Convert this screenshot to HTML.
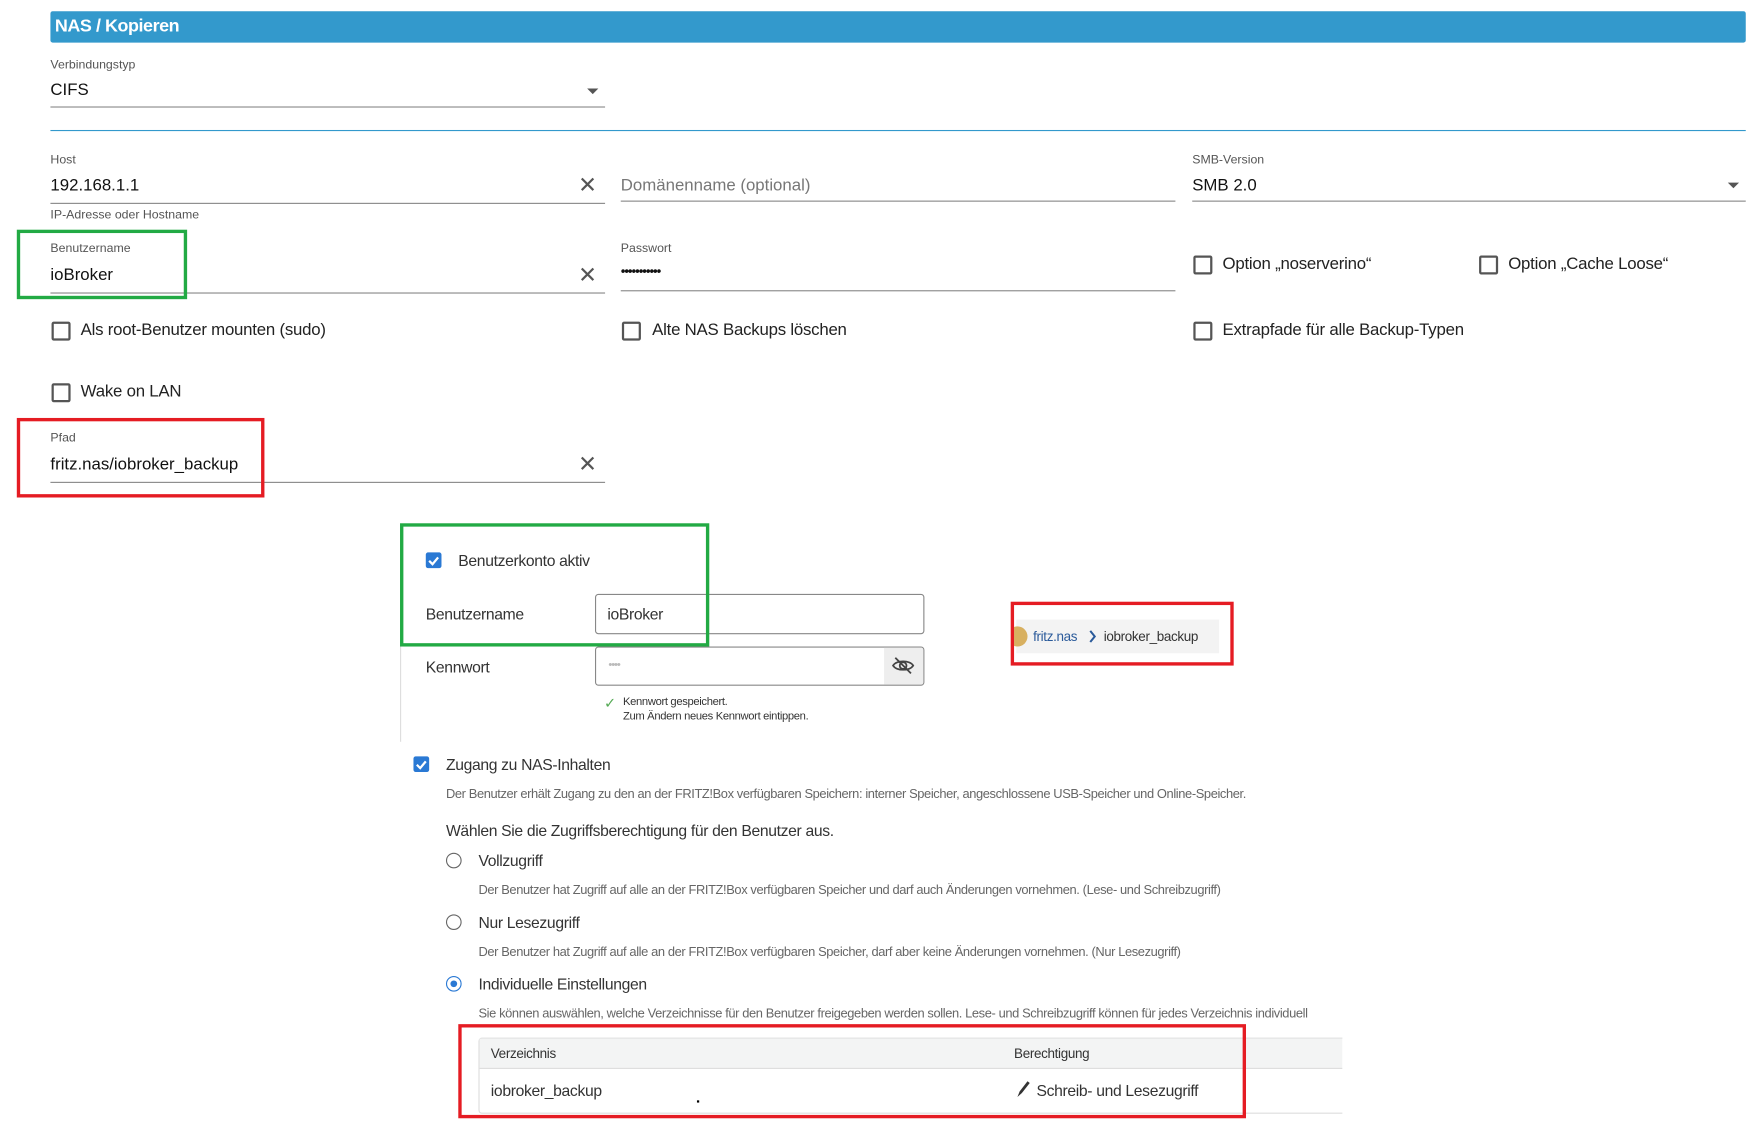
<!DOCTYPE html>
<html><head><meta charset="utf-8"><style>
html,body{margin:0;padding:0;background:#fff;width:1748px;height:1132px;overflow:hidden}
#w{position:absolute;left:0;top:0;width:1560px;height:1010px;transform:scale(1.12051);transform-origin:0 0;font-family:"Liberation Sans",sans-serif;color:#222}
.a{position:absolute;white-space:nowrap}
.lbl{font-size:11px;color:#555}
.val{font-size:15px;color:#111}
.ln{position:absolute;height:1px;background:#888}
.x{position:absolute;font-size:20px;color:#555;line-height:1}
.cb{position:absolute;width:13px;height:13px;border:2px solid #555;border-radius:2px}
.ct{font-size:15px;color:#222;letter-spacing:-.2px}
.box{position:absolute;border:3px solid}
.f{font-family:"Liberation Sans",sans-serif;color:#333;letter-spacing:-.3px}
.cbb{position:absolute;width:14px;height:14px;background:#2a79d4;border-radius:2px}
.rd{position:absolute;width:12px;height:12px;border:1.5px solid #666;border-radius:50%}
.d{font-size:11.5px;color:#666;letter-spacing:-.35px}
</style></head><body><div id="w">
<div class="a" style="left:45px;top:10px;width:1513px;height:28px;background:#3399cc;border-radius:2px"></div>
<div class="a" style="left:49px;top:15px;color:#fff;font-weight:bold;font-size:16px;letter-spacing:-.4px">NAS / Kopieren</div>

<div class="a lbl" style="left:45px;top:52px">Verbindungstyp</div>
<div class="a val" style="left:45px;top:72px">CIFS</div>
<div class="a" style="left:524px;top:79px;border:5px solid transparent;border-top:5px solid #555"></div>
<div class="ln" style="left:45px;top:95px;width:495px"></div>
<div class="ln" style="left:45px;top:116px;width:1513px;background:#3399cc"></div>

<div class="a lbl" style="left:45px;top:137px">Host</div>
<div class="a val" style="left:45px;top:157px">192.168.1.1</div>
<div class="x" style="left:516px;top:156px">✕</div>
<div class="ln" style="left:45px;top:181px;width:495px"></div>
<div class="a lbl" style="left:45px;top:186px">IP-Adresse oder Hostname</div>
<div class="a val" style="left:554px;top:157px;color:#777">Domänenname (optional)</div>
<div class="ln" style="left:554px;top:179px;width:495px"></div>
<div class="a lbl" style="left:1064px;top:137px">SMB-Version</div>
<div class="a val" style="left:1064px;top:157px">SMB 2.0</div>
<div class="a" style="left:1542px;top:163px;border:5px solid transparent;border-top:5px solid #555"></div>
<div class="ln" style="left:1064px;top:179px;width:494px"></div>

<div class="a lbl" style="left:45px;top:216px">Benutzername</div>
<div class="a val" style="left:45px;top:237px">ioBroker</div>
<div class="x" style="left:516px;top:236px">✕</div>
<div class="ln" style="left:45px;top:261px;width:495px"></div>
<div class="a lbl" style="left:554px;top:216px">Passwort</div>
<div class="a val" style="left:554px;top:235px;font-size:12px;letter-spacing:-1px">•••••••••••</div>
<div class="ln" style="left:554px;top:259px;width:495px"></div>
<div class="cb" style="left:1065px;top:228px"></div><div class="a ct" style="left:1091px;top:227px">Option „noserverino“</div>
<div class="cb" style="left:1320px;top:228px"></div><div class="a ct" style="left:1346px;top:227px">Option „Cache Loose“</div>
<div class="box" style="left:15px;top:205px;width:146px;height:56px;border-color:#22aa44"></div>

<div class="cb" style="left:46px;top:287px"></div><div class="a ct" style="left:72px;top:286px">Als root-Benutzer mounten (sudo)</div>
<div class="cb" style="left:555px;top:287px"></div><div class="a ct" style="left:582px;top:286px">Alte NAS Backups löschen</div>
<div class="cb" style="left:1065px;top:287px"></div><div class="a ct" style="left:1091px;top:286px">Extrapfade für alle Backup-Typen</div>
<div class="cb" style="left:46px;top:342px"></div><div class="a ct" style="left:72px;top:341px">Wake on LAN</div>

<div class="a lbl" style="left:45px;top:385px">Pfad</div>
<div class="a val" style="left:45px;top:406px">fritz.nas/iobroker_backup</div>
<div class="x" style="left:516px;top:405px">✕</div>
<div class="ln" style="left:45px;top:430px;width:495px"></div>
<div class="box" style="left:15px;top:373px;width:215px;height:65px;border-color:#e51c23"></div>

<div class="a" style="left:357px;top:576px;width:1px;height:86px;background:#ddd"></div>
<div class="cbb" style="left:380px;top:493px"><svg width="14" height="14"><path d="M3 7.5l3 3 5-6" stroke="#fff" stroke-width="2" fill="none"/></svg></div>
<div class="a f" style="left:409px;top:492px;font-size:14px">Benutzerkonto aktiv</div>
<div class="a f" style="left:380px;top:540px;font-size:14px">Benutzername</div>
<div class="a" style="left:531px;top:530px;width:292px;height:34px;border:1px solid #888;border-radius:3px"></div>
<div class="a f" style="left:542px;top:540px;font-size:14px">ioBroker</div>
<div class="a f" style="left:380px;top:587px;font-size:14px">Kennwort</div>
<div class="a" style="left:531px;top:577px;width:292px;height:33px;border:1px solid #888;border-radius:3px;overflow:hidden"><div style="position:absolute;right:0;top:0;width:35px;height:33px;background:#eee"></div></div>
<div class="a" style="left:543px;top:588px;font-size:10px;color:#bbb;letter-spacing:-1px">••••</div>
<svg class="a" style="left:795px;top:585px" width="22" height="18" viewBox="0 0 22 18"><path d="M2 9c3-5 15-5 18 0c-3 5-15 5-18 0z" stroke="#444" stroke-width="1.6" fill="none"/><circle cx="11" cy="9" r="3" stroke="#444" stroke-width="1.6" fill="none"/><path d="M4 2l14 14" stroke="#444" stroke-width="1.6"/></svg>
<div class="a" style="left:539px;top:620px;color:#5a5;font-size:13px">✓</div>
<div class="a f" style="left:556px;top:620px;font-size:10px;line-height:13px">Kennwort gespeichert.<br>Zum Ändern neues Kennwort eintippen.</div>
<div class="box" style="left:357px;top:467px;width:270px;height:104px;border-color:#22aa44"></div>

<div class="a" style="left:907px;top:553px;width:181px;height:30px;background:#f3f3f3"></div>
<div class="a" style="left:899px;top:559px;width:18px;height:18px;border-radius:50%;background:#d8b060"></div>
<div class="a" style="left:893px;top:553px;width:12px;height:30px;background:#fff"></div>
<div class="a f" style="left:922px;top:561px;font-size:12px;color:#2a5a9a">fritz.nas</div>
<svg class="a" style="left:971px;top:562px" width="8" height="12"><path d="M2 1l4 5-4 5" stroke="#2a5a9a" stroke-width="1.8" fill="none"/></svg>
<div class="a f" style="left:985px;top:561px;font-size:12px">iobroker_backup</div>
<div class="box" style="left:902px;top:537px;width:193px;height:51px;border-color:#e51c23"></div>

<div class="cbb" style="left:369px;top:675px"><svg width="14" height="14"><path d="M3 7.5l3 3 5-6" stroke="#fff" stroke-width="2" fill="none"/></svg></div>
<div class="a f" style="left:398px;top:674px;font-size:14px">Zugang zu NAS-Inhalten</div>
<div class="a f d" style="left:398px;top:703px">Der Benutzer erhält Zugang zu den an der FRITZ!Box verfügbaren Speichern: interner Speicher, angeschlossene USB-Speicher und Online-Speicher.</div>
<div class="a f" style="left:398px;top:733px;font-size:14px">Wählen Sie die Zugriffsberechtigung für den Benutzer aus.</div>
<div class="rd" style="left:398px;top:761px"></div><div class="a f" style="left:427px;top:760px;font-size:14px">Vollzugriff</div>
<div class="a f d" style="left:427px;top:789px">Der Benutzer hat Zugriff auf alle an der FRITZ!Box verfügbaren Speicher und darf auch Änderungen vornehmen. (Lese- und Schreibzugriff)</div>
<div class="rd" style="left:398px;top:816px"></div><div class="a f" style="left:427px;top:815px;font-size:14px">Nur Lesezugriff</div>
<div class="a f d" style="left:427px;top:844px">Der Benutzer hat Zugriff auf alle an der FRITZ!Box verfügbaren Speicher, darf aber keine Änderungen vornehmen. (Nur Lesezugriff)</div>
<div class="rd" style="left:398px;top:871px;border-color:#2a79d4"><div style="position:absolute;left:3px;top:3px;width:6px;height:6px;border-radius:50%;background:#2a79d4"></div></div>
<div class="a f" style="left:427px;top:870px;font-size:14px">Individuelle Einstellungen</div>
<div class="a f d" style="left:427px;top:899px;width:770px;overflow:hidden">Sie können auswählen, welche Verzeichnisse für den Benutzer freigegeben werden sollen. Lese- und Schreibzugriff können für jedes Verzeichnis individuell</div>

<div class="a" style="left:427px;top:926px;width:775px;height:66px;border:1px solid #ddd;border-radius:3px"></div>
<div class="a" style="left:428px;top:927px;width:770px;height:26px;background:#f3f4f4;border-bottom:1px solid #ddd"></div>
<div class="a f" style="left:438px;top:933px;font-size:12px">Verzeichnis</div>
<div class="a f" style="left:905px;top:933px;font-size:12px">Berechtigung</div>
<div class="a f" style="left:438px;top:965px;font-size:14px">iobroker_backup</div>
<div class="a" style="left:622px;top:982px;width:2px;height:2px;background:#000"></div>
<svg class="a" style="left:906px;top:964px" width="14" height="16"><path d="M2 15l2-5 7-9 2 1.5-7 9z" fill="#333"/></svg>
<div class="a f" style="left:925px;top:965px;font-size:14px">Schreib- und Lesezugriff</div>
<div class="a" style="left:1198px;top:895px;width:40px;height:110px;background:#fff"></div>
<div class="box" style="left:409px;top:914px;width:697px;height:78px;border-color:#e51c23"></div>
</div></body></html>
